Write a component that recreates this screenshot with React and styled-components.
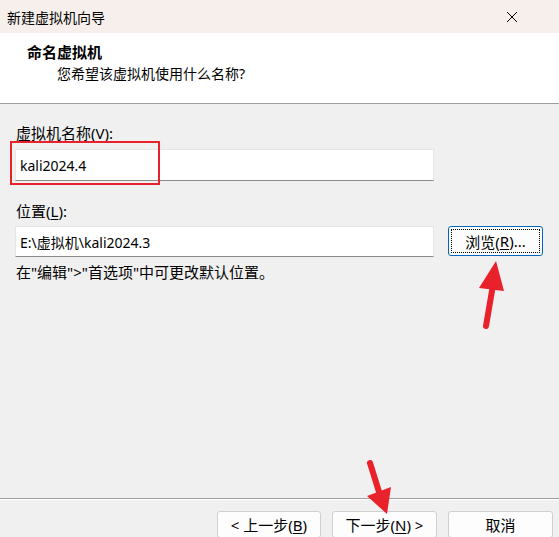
import React from "react";
import styled, { createGlobalStyle } from "styled-components";

const Global = createGlobalStyle`
  html, body { margin: 0; padding: 0; background: #f0f0f0; }
  body { font-family: "Noto Sans", "Noto Sans CJK SC", sans-serif; }
`;

const Window = styled.div`
  position: relative;
  width: 559px;
  height: 537px;
  display: flex;
  flex-direction: column;
  background: #f0f0f0;
  overflow: hidden;
  color: #000;
`;

const TitleBar = styled.div`
  height: 33px;
  flex: none;
  display: flex;
  align-items: center;
  justify-content: space-between;
  padding: 0 41px 0 7px;
  background: #f6efeb;
  font-size: 14px;
`;

const Header = styled.div`
  height: 71px;
  flex: none;
  background: #fff;
  border-bottom: 1px solid #a0a0a0;
  padding: 9px 0 0 27px;
  box-sizing: border-box;
`;

const HeaderTitle = styled.div`
  font-weight: bold;
  font-size: 15px;
  line-height: 20px;
`;

const HeaderSub = styled.div`
  font-size: 14px;
  line-height: 20px;
  margin: 2px 0 0 30px;
`;

const Body = styled.div`
  flex: 1;
  padding: 19px 0 0 15px;
`;

const Label = styled.div`
  font-size: 15px;
  line-height: 20px;
  padding-left: 1px;
  margin-top: ${(p) => p.$mt || 0}px;
`;

const U = styled.span`
  text-decoration: underline;
  text-underline-offset: 2px;
`;

const Row = styled.div`
  display: flex;
  align-items: flex-start;
  gap: 14px;
  margin-top: ${(p) => p.$mt || 0}px;
`;

const Field = styled.div`
  position: relative;
  width: 419px;
  height: ${(p) => p.$h}px;
  box-sizing: border-box;
  background: #fff;
  border: 1px solid #e5e5e5;
  border-bottom: 1px solid #8a8a8a;
  display: flex;
  align-items: center;
  padding-left: 4px;
  font-size: 14px;
`;

const Highlight = styled.div`
  position: absolute;
  left: -6px;
  top: -9px;
  width: 150px;
  height: 44px;
  box-sizing: border-box;
  border: 2px solid #e8212b;
`;

const Button = styled.button`
  width: ${(p) => p.$w}px;
  height: ${(p) => p.$h || 27}px;
  box-sizing: border-box;
  background: #fdfdfd;
  border: 1px solid ${(p) => (p.$focus ? "#0067c0" : "#d0d0d0")};
  border-radius: 3px;
  font-family: "Noto Sans", "Noto Sans CJK SC", sans-serif;
  font-size: 15px;
  color: #000;
  padding: 0;
  display: flex;
  align-items: center;
  justify-content: center;
`;

const FocusRing = styled.span`
  display: flex;
  align-items: center;
  justify-content: center;
  width: calc(100% - 4px);
  height: calc(100% - 4px);
  border: 1px dotted #000;
  box-sizing: border-box;
`;

const Note = styled.div`
  font-size: 15px;
  line-height: 20px;
  margin-top: 5px;
  padding-left: 1px;
`;

const Footer = styled.div`
  height: 39px;
  flex: none;
  border-top: 1px solid #a0a0a0;
  box-shadow: inset 0 1px 0 #fff;
  display: flex;
  justify-content: flex-end;
  gap: 11px;
  padding: 12px 6px 0 0;
  box-sizing: border-box;
`;

const Overlay = styled.svg`
  position: absolute;
  left: 0;
  top: 0;
  pointer-events: none;
`;

export default function App() {
  return (
    <Window>
      <Global />
      <TitleBar>
        <span>新建虚拟机向导</span>
        <svg width="12" height="12" viewBox="0 0 12 12">
          <path d="M1 1L11 11M11 1L1 11" stroke="#000" strokeWidth="1" />
        </svg>
      </TitleBar>
      <Header>
        <HeaderTitle>命名虚拟机</HeaderTitle>
        <HeaderSub>您希望该虚拟机使用什么名称?</HeaderSub>
      </Header>
      <Body>
        <Label>
          虚拟机名称(<U>V</U>):
        </Label>
        <Row $mt={6}>
          <Field $h={32}>
            kali2024.4
            <Highlight />
          </Field>
        </Row>
        <Label $mt={20}>
          位置(<U>L</U>):
        </Label>
        <Row $mt={5}>
          <Field $h={31}>E:\虚拟机\kali2024.3</Field>
          <Button $w={95} $h={30} $focus>
            <FocusRing>
              浏览(<U>R</U>)...
            </FocusRing>
          </Button>
        </Row>
        <Note>在"编辑"&gt;"首选项"中可更改默认位置。</Note>
      </Body>
      <Footer>
        <Button $w={104}>
          &lt; 上一步(<U>B</U>)
        </Button>
        <Button $w={105}>
          下一步(<U>N</U>) &gt;
        </Button>
        <Button $w={105}>取消</Button>
      </Footer>
      <Overlay width="559" height="537">
        <line x1="486" y1="326" x2="493" y2="285" stroke="#e8212b" strokeWidth="6" strokeLinecap="round" />
        <polygon points="496,261 479,288 504,291" fill="#e8212b" />
        <line x1="370" y1="463" x2="380" y2="495" stroke="#e8212b" strokeWidth="6" strokeLinecap="round" />
        <polygon points="387,514 367,496 391,487" fill="#e8212b" />
      </Overlay>
    </Window>
  );
}
